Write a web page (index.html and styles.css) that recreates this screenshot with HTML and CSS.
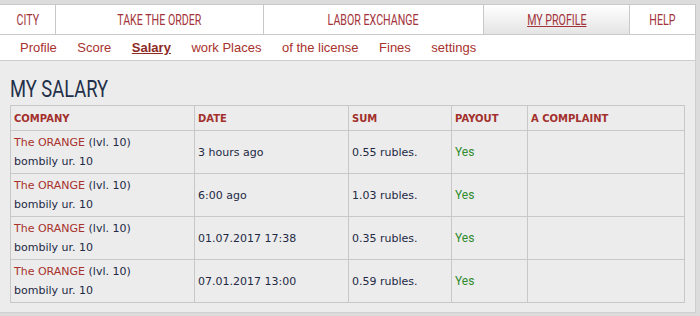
FILE: index.html
```html
<!DOCTYPE html>
<html>
<head>
<meta charset="utf-8">
<link rel="stylesheet" href="styles.css">
</head>
<body>
<div class="wrap">
  <nav class="tabs">
    <a class="tab tab-city"><span>CITY</span></a>
    <a class="tab tab-order"><span>TAKE THE ORDER</span></a>
    <a class="tab tab-labor"><span>LABOR EXCHANGE</span></a>
    <a class="tab tab-profile active"><span>MY PROFILE</span></a>
    <a class="tab tab-help"><span>HELP</span></a>
  </nav>
  <nav class="subnav">
    <a>Profile</a>
    <a>Score</a>
    <a class="current">Salary</a>
    <a>work Places</a>
    <a>of the license</a>
    <a>Fines</a>
    <a>settings</a>
  </nav>
  <main class="panel">
    <h1>MY SALARY</h1>
    <table class="salary">
      <thead>
        <tr>
          <th class="c-company">COMPANY</th>
          <th class="c-date">DATE</th>
          <th class="c-sum">SUM</th>
          <th class="c-payout">PAYOUT</th>
          <th class="c-complaint">A COMPLAINT</th>
        </tr>
      </thead>
      <tbody>
        <tr>
          <td><a class="company">The ORANGE</a> (lvl. 10)<br>bombily ur. 10</td>
          <td>3 hours ago</td>
          <td>0.55 rubles.</td>
          <td class="yes">Yes</td>
          <td></td>
        </tr>
        <tr>
          <td><a class="company">The ORANGE</a> (lvl. 10)<br>bombily ur. 10</td>
          <td>6:00 ago</td>
          <td>1.03 rubles.</td>
          <td class="yes">Yes</td>
          <td></td>
        </tr>
        <tr>
          <td><a class="company">The ORANGE</a> (lvl. 10)<br>bombily ur. 10</td>
          <td>01.07.2017 17:38</td>
          <td>0.35 rubles.</td>
          <td class="yes">Yes</td>
          <td></td>
        </tr>
        <tr>
          <td><a class="company">The ORANGE</a> (lvl. 10)<br>bombily ur. 10</td>
          <td>07.01.2017 13:00</td>
          <td>0.59 rubles.</td>
          <td class="yes">Yes</td>
          <td></td>
        </tr>
      </tbody>
    </table>
  </main>
</div>
</body>
</html>
```

FILE: styles.css
```css
html, body {
  margin: 0;
  padding: 0;
}
body {
  background: #dcdcdc;
  width: 700px;
  height: 316px;
  overflow: hidden;
}
.wrap {
  width: 696px;
  padding-top: 4px;
}
.tabs {
  display: flex;
  height: 29px;
  background: #fff;
  border-top: 1px solid #c9c9c9;
  border-bottom: 1px solid #c9c9c9;
  border-right: 1px solid #c9c9c9;
}
.tab {
  display: flex;
  justify-content: center;
  align-items: center;
  box-sizing: border-box;
  border-right: 1px solid #c9c9c9;
  color: #a3333a;
  font-family: Roboto, "Liberation Sans", sans-serif;
  font-size: 15px;
  text-transform: uppercase;
}
.tab span {
  display: inline-block;
  transform: scaleX(0.71);
  white-space: nowrap;
}
.tab:last-child { border-right: none; }
.tab-city { width: 56px; }
.tab-order { width: 208px; }
.tab-labor { width: 220px; }
.tab-profile { width: 146px; }
.tab-help { flex: 1; }
.tab.active {
  background: linear-gradient(#ffffff, #e4e4e4);
}
.tab.active span {
  text-decoration: underline;
}
.subnav {
  display: flex;
  gap: 20.5px;
  height: 25px;
  padding-left: 20px;
  align-items: center;
  background: #fff;
  border-bottom: 1px solid #cdcdcd;
  border-right: 1px solid #cdcdcd;
  font-family: "Liberation Sans", Arial, sans-serif;
  font-size: 13px;
}
.subnav a {
  color: #a8322d;
}
.subnav a.current {
  font-weight: bold;
  text-decoration: underline;
  color: #8c2a26;
}
.panel {
  display: block;
  background: #ececec;
  padding: 10px 10px 9px 10px;
  border-right: 1px solid #cfcfcf;
  border-bottom: 1px solid #cfcfcf;
}
h1 {
  margin: 5px 0 3px 0;
  font-family: Roboto, "Liberation Sans", sans-serif;
  font-weight: normal;
  font-size: 23.5px;
  line-height: 26px;
  color: #23304a;
  transform: scaleX(0.78);
  transform-origin: left center;
  white-space: nowrap;
}
.salary {
  width: 675px;
  border-collapse: collapse;
  font-family: "DejaVu Sans", Verdana, sans-serif;
  font-size: 11px;
  color: #232945;
}
.salary th, .salary td {
  border: 1px solid #c8c8c8;
  text-align: left;
  vertical-align: middle;
  padding: 2px 3px;
}
.salary th {
  height: 18px;
  font-size: 10px;
  font-weight: bold;
  color: #a3302c;
  padding: 3px 3px;
}
.salary td {
  line-height: 19px;
  height: 38px;
}
.c-company { width: 177px; }
.c-date { width: 147px; }
.c-sum { width: 96px; }
.c-payout { width: 69px; }
.company { color: #a8322d; }
.yes {
  color: #2e8b2e;
  font-family: Roboto, "Liberation Sans", sans-serif;
  font-size: 12px;
}
```
